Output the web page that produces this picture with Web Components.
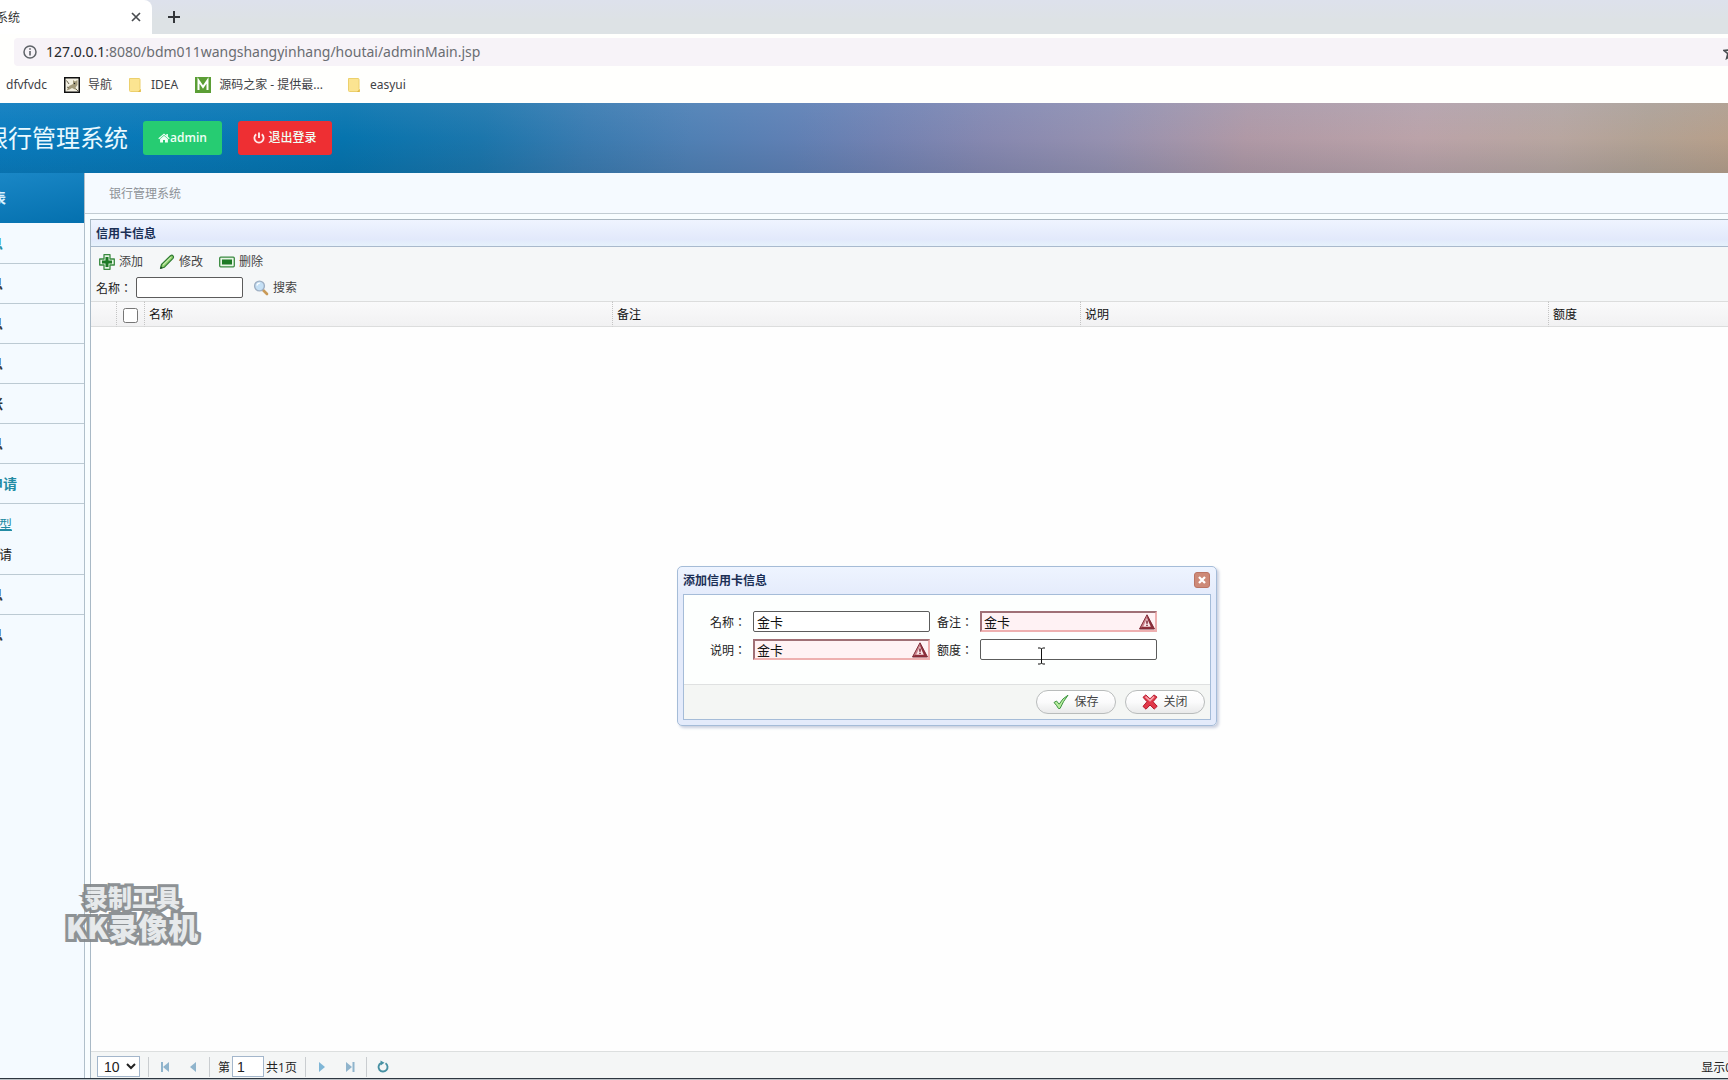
<!DOCTYPE html>
<html lang="zh-CN">
<head>
<meta charset="utf-8">
<title>银行管理系统</title>
<style>
  html, body { height: 100%; margin: 0; }
  body {
    overflow: hidden;
    font: 12px/16px "Open Sans", "Noto Sans CJK SC", sans-serif;
    color: #111;
    background: #fefffe;
  }
</style>
</head>
<body>
<bank-app></bank-app>

<script>
const ICONS = {
  close: ['0 0 12 12', '<path d="M2 2l8 8M10 2l-8 8" stroke="#4a4d51" stroke-width="1.7"/>'],
  plus: ['0 0 14 14', '<path d="M7 1v12M1 7h12" stroke="#33363a" stroke-width="2"/>'],
  info: ['0 0 14 14', '<circle cx="7" cy="7" r="6" fill="none" stroke="#5f6368" stroke-width="1.5"/><path d="M7 6v4.500M7 3.300v1.500" stroke="#5f6368" stroke-width="1.600"/>'],
  star: ['0 0 16 16', '<path d="M8 1.500l2 4.500 5 .5-3.800 3.200 1.200 4.800L8 12l-4.400 2.500 1.200-4.800L1 6.500 6 6z" fill="none" stroke="#4a4d51" stroke-width="1.600"/>'],
  cat: ['0 0 16 16', '<rect x=".75" y=".75" width="14.500" height="14.500" fill="#f3f0e2" stroke="#111" stroke-width="1.500"/><path d="M2.500 13.500L5 9l4-2V3l2 1.500L13.500 3v5l-2 2.500L13 13l-3-1-2-1-2.500 1.500z" fill="#a39a7b"/><path d="M2.500 3.500L5 7M12 12l2 2M3 10l2 1" stroke="#6b6550"/><circle cx="10.500" cy="6.500" r=".7" fill="#222"/>'],
  folder: ['0 0 12 16', '<path d="M.5 1.500h9.500q1 0 1 1v9l.8 3H1.500q-1 0-1-1z" fill="#fbe491" stroke="#ecd06c"/><path d="M9 15l2.500-3v3z" fill="#e2b944"/>'],
  m: ['0 0 16 16', '<rect width="16" height="16" fill="#5b9e35"/><path d="M3.500 13V3.500L8 10l4.500-6.500V13" fill="none" stroke="#fff" stroke-width="2"/>'],
  home: ['0 0 14 12', '<path d="M7 .5L.2 6.400l.9 1L7 2.400l5.900 5 .9-1L11.700 4.500V1.300H9.800v1.600z"/><path d="M2.300 7.300L7 3.400l4.700 3.900V11.500H8.200V8.300H5.800v3.200H2.300z"/>'],
  power: ['0 0 12 12', '<path d="M3.200 2.300a4.600 4.600 0 1 0 5.600 0" fill="none" stroke="#ffe9e9" stroke-width="1.800"/><path d="M6 .5v5.500" stroke="#ffe9e9" stroke-width="1.900"/>'],
  add: ['0 0 16 16', '<path d="M5 .7h6v4.300h4.300v6H11v4.300H5V11H.7V5H5z" fill="#e7f5e5" stroke="#3a8a40" stroke-width="1.300" stroke-linejoin="round"/><path d="M6.500 3h3v3.500H13v3H9.500V13h-3V9.500H3v-3h3.500z" fill="#1d7a25"/>'],
  edit: ['0 0 16 16', '<path d="M1.500 14.500l1-4L11.500 1.700q1.500-1 2.500.1 1 1.200 0 2.500L5.200 13.300z" fill="#8fcf6c" stroke="#2f7c33" stroke-width="1.200" stroke-linejoin="round"/><path d="M4 11L12 3.200" stroke="#c9efb3" stroke-width="1.100"/><path d="M1.200 14.800l.7-2.600 1.900 1.900z" fill="#1c4a22"/>'],
  remove: ['0 0 16 16', '<rect x=".7" y="3.200" width="14.600" height="9.600" rx="1" fill="#e7f5e5" stroke="#3a8a40" stroke-width="1.300"/><rect x="3" y="5.500" width="10" height="5" fill="#1d7a25"/>'],
  search: ['0 0 16 16', '<path d="M9.500 9.500l4.500 4.500" stroke="#c99a57" stroke-width="2.600" stroke-linecap="round"/><circle cx="6.500" cy="6" r="4.900" fill="#c5e0f5" stroke="#9fb0c4" stroke-width="1.400"/><path d="M3.800 5.500q.6-2.200 3-2.300" stroke="#fff" stroke-width="1.200" fill="none"/>'],
  warn: ['0 0 16 16', '<path d="M8 .8L15.500 15H.5z" fill="#8f2f3b" stroke="#7c2a36" stroke-linejoin="round"/><path d="M8 1.500L1.800 13.500l3-1L8.500 5z" fill="#c9808a"/><path d="M8 4.200L11.800 12.800H4.200z" fill="#f9e6e8"/><path d="M8 6.500v3.300M8 10.700v1.400" stroke="#7c2030" stroke-width="1.500"/>'],
  ok: ['0 0 16 16', '<path d="M1 8.500l2.500-1.500 2.700 3.200Q9 4.500 15 1.200 10 7.500 7 14.500H5.500Q3.500 11 1 8.500z" fill="#b9ec9f" stroke="#3c9440" stroke-linejoin="round"/>'],
  cancel: ['0 0 16 16', '<path d="M1 3.300L3.800.9 8 4.800 12 .9l3 2.200L11 7.700l4.200 4.600-3 2.800L8 11l-4 4.200-3-2.800 4-4.700z" fill="#e0394a" stroke="#b5172b" stroke-linejoin="round"/><path d="M3.500 2.700L8 6.700l4-4" stroke="#f6a3ab" stroke-width="1.700" fill="none"/>'],
  shut: ['0 0 16 16', '<rect x=".5" y=".5" width="15" height="15" rx="2.500" fill="#cd8a78" stroke="#bb7463"/><path d="M5 5l6 6M11 5l-6 6" stroke="#fff" stroke-width="2.300"/>'],
  first: ['0 0 16 16', '<path d="M5 3v10" stroke="#8fb4cc" stroke-width="2"/><path d="M12 3v10L6 8z" fill="#8fb4cc"/>'],
  prev: ['0 0 16 16', '<path d="M11 3v10L5 8z" fill="#8fb4cc"/>'],
  next: ['0 0 16 16', '<path d="M5 3v10l6-5z" fill="#7fb6d6"/>'],
  last: ['0 0 16 16', '<path d="M11.500 3v10" stroke="#8fb4cc" stroke-width="2"/><path d="M4 3v10l6-5z" fill="#8fb4cc"/>'],
  reload: ['0 0 16 16', '<path d="M10.500 4.300a4.500 4.500 0 1 1-4.600-.2" fill="none" stroke="#4791a3" stroke-width="1.900"/><path d="M5.500 1.500l4 2.300-3.800 2.600z" fill="#4791a3"/>'],
  cursor: ['0 0 9 18', '<path d="M1 1h2.500l1 1 1-1H8M1 17h2.500l1-1 1 1H8M4.500 2v14" fill="none" stroke="#111"/>']
};

function define(name, css, html) {
  customElements.define(name, class extends HTMLElement {
    constructor() {
      super();
      const root = this.attachShadow({ mode: 'open' });
      root.innerHTML = `<style>*{box-sizing:border-box}${css}</style>` +
        (typeof html === 'function' ? html(this) : html);
    }
  });
}

define('ui-icon', `
  :host { display: inline-flex; flex: none; width: 16px; height: 16px; }
  svg { width: 100%; height: 100%; fill: currentColor; }
`, el => {
  const [box, body] = ICONS[el.getAttribute('name')];
  return `<svg viewBox="${box}" aria-hidden="true">${body}</svg>`;
});

define('bookmark-link', `
  :host { display: flex; }
  a { display: flex; align-items: center; gap: 8px; color: #3f4246; text-decoration: none; white-space: nowrap; }
`, '<a href="#"><slot name="icon"></slot><span><slot></slot></span></a>');

define('browser-chrome', `
  :host { display: block; flex: none; background: #fffffd; overflow: hidden; font-family: "Noto Sans", "Noto Sans CJK SC", sans-serif; }
  .tabs { display: flex; align-items: center; height: 34px; background: linear-gradient(#dde1ec, #dde2e5 60%); }
  .tab { display: flex; align-items: center; justify-content: space-between; width: 152px; height: 34px;
    padding-right: 10px; background: #fff; border-radius: 0 8px 0 0; color: #333; overflow: hidden; }
  .tab span { margin-left: -4px; padding-top: 2px; }
  button { display: flex; padding: 0; border: 0; background: none; }
  .close ui-icon { width: 12px; height: 12px; }
  .new { margin-left: 15px; }
  .new ui-icon { width: 14px; height: 14px; }
  .omni { display: flex; align-items: center; gap: 9px; height: 28px; margin: 4px 0 0 14px; padding-left: 9px;
    background: #f7f3f8; border-radius: 4px 0 0 4px; }
  .omni > ui-icon { width: 14px; height: 14px; }
  .url { flex: 1; font-size: 14px; line-height: 20px; color: #6a6d72; }
  .url b { font-weight: 400; color: #26282b; }
  .star { margin-right: -11px; }
  .marks { display: flex; align-items: center; height: 37px; padding-left: 6px; gap: 17px; }
  .folder { width: 12px; margin-right: 2px; }
  .wide { margin-right: 8px; }
`, `
  <div class="tabs">
    <div class="tab"><span>系统</span><button class="close" aria-label="关闭标签页"><ui-icon name="close"></ui-icon></button></div>
    <button class="new" aria-label="新标签页"><ui-icon name="plus"></ui-icon></button>
  </div>
  <div class="omni"><ui-icon name="info"></ui-icon>
    <span class="url"><b>127.0.0.1</b>:8080/bdm011wangshangyinhang/houtai/adminMain.jsp</span>
    <button class="star" aria-label="收藏"><ui-icon name="star"></ui-icon></button>
  </div>
  <nav class="marks">
    <bookmark-link>dfvfvdc</bookmark-link>
    <bookmark-link><ui-icon slot="icon" name="cat"></ui-icon>导航</bookmark-link>
    <bookmark-link><ui-icon slot="icon" class="folder" name="folder"></ui-icon>IDEA</bookmark-link>
    <bookmark-link class="wide"><ui-icon slot="icon" name="m"></ui-icon>源码之家 - 提供最...</bookmark-link>
    <bookmark-link><ui-icon slot="icon" class="folder" name="folder"></ui-icon>easyui</bookmark-link>
  </nav>
`);

define('app-banner', `
  :host { display: flex; align-items: center; gap: 16px; flex: none; height: 70px; overflow: hidden;
    background:
      linear-gradient(rgba(150,190,230,.12), rgba(0,0,0,0) 50%, rgba(0,30,50,.1)),
      linear-gradient(97deg, #0a7cbe 0, #0674ae 20%, #1c76ac 28%, #3a7bb0 34%, #5080b4 40%, #6080b4 46%, #7282b2 51%, #8688b0 57%, #9691b0 64%, #b099a6 72%, #bba3a9 82%, #b8a6a0 90%, #b3a294 95%, #b79f8a 100%); }
  h1 { margin: 0 0 0 -16px; font-size: 24px; line-height: 32px; font-weight: 400; color: #e9f9ff; white-space: nowrap; }
  button { display: flex; align-items: center; justify-content: center; gap: 3px; height: 34px; padding: 0 15px; border: 0; border-radius: 3px;
    font: 600 12px/16px "Open Sans", "Noto Sans CJK SC", sans-serif; color: #effff5; }
  .user { background: #26cc72; gap: 0; min-width: 79px; margin-left: -1px; }
  .exit { background: #ee2f33; min-width: 94px; font-weight: 500; }
  .user ui-icon { width: 12px; height: 10px; }
  .exit ui-icon { width: 12px; height: 12px; }
`, `
  <h1>银行管理系统</h1>
  <button class="user"><ui-icon name="home"></ui-icon>admin</button>
  <button class="exit"><ui-icon name="power"></ui-icon>退出登录</button>
`);

define('nav-item', `
  :host { display: block; border-bottom: 1px solid #bccad3; }
  a { display: block; height: 39px; margin-left: -11px; font-size: 14px; line-height: 40px; font-weight: 700; color: #2e3338; text-decoration: none; }
  :host([active]) a { color: #238ba3; }
`, '<a href="#"><slot></slot></a>');

define('side-nav', `
  :host { display: block; flex: none; width: 85px; overflow: hidden; background: #f4faff; border-right: 1px solid #b0bfca; }
  h2 { margin: 0; height: 50px; text-indent: -8px; font-size: 14px; line-height: 50px; font-weight: 700; color: #d9f2ff;
    background: linear-gradient(170deg, #1a87c6, #0470ae); }
  nav { padding-top: 1px; }
  .kids { padding: 5px 0; border-bottom: 1px solid #bccad3; }
  .kids a { display: block; margin-left: -1px; font-size: 13px; line-height: 30px; color: #222; text-decoration: none; }
  .kids .on { color: #238ba3; text-decoration: underline; }
  nav > :last-child { border: 0; }
`, `
  <h2>表</h2>
  <nav>
    <nav-item active>息</nav-item><nav-item>息</nav-item><nav-item>息</nav-item><nav-item>息</nav-item>
    <nav-item>账</nav-item><nav-item>息</nav-item><nav-item active>申请</nav-item>
    <div class="kids"><a class="on" href="#">型</a><a href="#">请</a></div>
    <nav-item>息</nav-item><nav-item>息</nav-item>
  </nav>
`);

define('tool-button', `
  :host { display: inline-flex; }
  button { display: flex; align-items: center; gap: 4px; padding: 0; border: 0; background: none; font: inherit; color: #444; white-space: nowrap; }
  :host([round]) button { justify-content: center; gap: 5px; width: 80px; height: 24px; border: 1px solid #b9bcbc; border-radius: 12px;
    background: linear-gradient(#fff, #fbfbfc 50%, #e9eaea); }
`, el => `<button><ui-icon name="${el.getAttribute('icon')}"></ui-icon><slot></slot></button>`);

define('form-field', `
  :host { display: flex; align-items: center; gap: var(--gap, 7px); color: #222; }
  label { white-space: nowrap; width: 36px; font-family: "Noto Sans CJK TC", sans-serif; font-feature-settings: "locl" 0; }
  .box { display: flex; align-items: center; width: var(--w, 177px); height: 21px; border: 1px solid #5c5c5c; border-radius: 2px; background: #fff; }
  input { flex: 1; min-width: 0; height: 100%; padding: 0 0 0 3px; border: 0; outline: 0; background: none;
    font: 13px/16px "Open Sans", "Noto Sans CJK SC", sans-serif; color: #111; }
  :host([invalid]) .box { border: 2px solid; border-color: #a07076 #eeb0b0 #eeb0b0 #a07076; border-radius: 0; background: #fff2f4; }
  :host([invalid]) input { padding-left: 2px; }
`, el => `<label for="f"><slot></slot></label><div class="box"><input id="f" value="${el.getAttribute('value') || ''}">${el.hasAttribute('invalid') ? '<ui-icon name="warn"></ui-icon>' : ''}</div>`);

define('page-bar', `
  :host { display: flex; align-items: center; gap: 8px; flex: none; height: 27px; padding: 3px 0 0 6px; border-top: 1px solid #dcdfdf; background: #f4f6f6; overflow: hidden; white-space: nowrap; color: #222; }
  select { width: 43px; height: 21px; padding: 0 0 0 2px; border: 1px solid #a3b6cb; background: #fff; font: 14px/16px "Liberation Sans", sans-serif; color: #222; }
  input { width: 32px; height: 21px; padding: 0 4px; border: 1px solid #a3b6cb; background: #fff; font: 14px/16px "Liberation Sans", sans-serif; color: #222; }
  i { width: 1px; height: 20px; background: #c9cdd0; }
  button { display: flex; padding: 0; border: 0; background: none; }
  .grp { display: flex; gap: 12px; }
  .page { display: flex; align-items: center; gap: 2px; }
  .page label, .page span, .end { padding-top: 2px; }
  .end { margin: 0 -4px 0 auto; }
`, `
  <select aria-label="每页条数"><option>10</option></select><i></i>
  <div class="grp"><button aria-label="首页"><ui-icon name="first"></ui-icon></button><button aria-label="上一页"><ui-icon name="prev"></ui-icon></button></div><i></i>
  <div class="page"><label for="p">第</label><input id="p" value="1"><span>共1页</span></div><i></i>
  <div class="grp"><button aria-label="下一页"><ui-icon name="next"></ui-icon></button><button aria-label="末页"><ui-icon name="last"></ui-icon></button></div><i></i>
  <button aria-label="刷新"><ui-icon name="reload"></ui-icon></button>
  <span class="end">显示0</span>
`);

define('data-panel', `
  :host { display: flex; flex-direction: column; flex: 1; min-height: 0; border-top: 1px solid #a9b6c0; border-left: 1px solid #a9b9c6; overflow: hidden; background: #fefefe; }
  h2 { margin: 0; padding: 1px 0 0 5px; height: 27px; font-size: 12px; line-height: 26px; font-weight: 700; color: #1b2f55;
    background: linear-gradient(#eff4ff, #e2e9fb 75%, #e6f2fc); border-bottom: 1px solid #a9b9cc; }
  .tools { height: 54px; background: #f5f7f8; padding: 7px 0 0 5px; }
  .row { display: flex; align-items: center; }
  .actions { gap: 16px; padding-left: 3px; height: 16px; }
  .query { gap: 10px; height: 21px; margin-top: 7px; }
  form-field { --w: 107px; --gap: 4px; }
  table { width: 100%; table-layout: fixed; border-collapse: separate; border-spacing: 0; background: linear-gradient(#fafafb, #f1f1f2); }
  th { height: 26px; padding: 2px 4px 0; border: 0 dotted #c4c4c4; border-right-width: 1px; border-top: 1px solid #dcdddd; border-bottom: 1px solid #dcdddd; text-align: left; font-weight: 400; color: #111; }
  th:last-child { border-right: 0; }
  th input { display: block; width: 15px; height: 15px; margin: 0 0 0 2px; }
  .grid { flex: 1; }
`, `
  <h2>信用卡信息</h2>
  <div class="tools">
    <div class="row actions"><tool-button icon="add">添加</tool-button><tool-button icon="edit">修改</tool-button><tool-button icon="remove">删除</tool-button></div>
    <div class="row query"><form-field>名称：</form-field><tool-button icon="search">搜索</tool-button></div>
  </div>
  <div class="grid"><table>
    <colgroup><col style="width:26px"><col style="width:28px"><col style="width:468px"><col style="width:468px"><col style="width:468px"><col></colgroup>
    <thead><tr><th></th><th><input type="checkbox" aria-label="全选"></th><th>名称</th><th>备注</th><th>说明</th><th>额度</th></tr></thead>
  </table></div>
  <page-bar></page-bar>
`);

define('card-dialog', `
  :host { position: absolute; left: 677px; top: 566px; width: 540px; display: block; padding: 5px; border: 1px solid #a5bcd8; border-radius: 5px;
    background: linear-gradient(#eef4ff, #e4ebfb 30px); box-shadow: 2px 2px 3px #c9cfdf; }
  header { display: flex; align-items: flex-start; justify-content: space-between; height: 22px; padding-right: 1px; }
  h3 { margin: 0; font-size: 12px; line-height: 18px; font-weight: 700; color: #1b2f55; }
  header button { display: flex; padding: 0; border: 0; background: none; }
  .body { border: 1px solid #a5bcd8; background: #fdfffe; }
  .fields { display: grid; grid-template-columns: max-content max-content; gap: 7px; height: 89px; align-content: start; padding: 16px 0 0 26px; }
  footer { display: flex; justify-content: flex-end; gap: 9px; padding: 5px; border-top: 1px solid #dfe1e1; background: #f4f6f4; }
`, `
  <header><h3>添加信用卡信息</h3><button aria-label="关闭窗口"><ui-icon name="shut"></ui-icon></button></header>
  <div class="body">
    <div class="fields">
      <form-field value="金卡">名称：</form-field><form-field value="金卡" invalid>备注：</form-field>
      <form-field value="金卡" invalid>说明：</form-field><form-field>额度：</form-field>
    </div>
    <footer><tool-button round icon="ok">保存</tool-button><tool-button round icon="cancel">关闭</tool-button></footer>
  </div>
`);

define('recorder-mark', `
  :host { position: absolute; left: 63px; top: 883px; width: 138px; display: block; text-align: center; opacity: .9; white-space: nowrap;
    font: 900 24px/28px "Noto Sans CJK SC", sans-serif; color: #e4e7e9; -webkit-text-stroke: 6px #82878a; paint-order: stroke fill; }
  .big { font-size: 30px; line-height: 30px; }
`, '<div>录制工具</div><div class="big">KK录像机</div>');

define('bank-app', `
  :host { display: flex; flex-direction: column; height: 100vh; position: relative; overflow: hidden; }
  main { display: flex; flex: 1; min-height: 0; }
  .content { display: flex; flex-direction: column; flex: 1; min-width: 0; background: #f8fdff; }
  .crumb { height: 41px; padding: 1px 0 0 24px; line-height: 40px; color: #8d9297; background: #f5faff; border-bottom: 1px solid #c2ccd3; }
  data-panel { margin: 5px 0 0 5px; }
  .edge { flex: none; height: 2px; background: #b9bfc4; border-top: 1px solid #2d3640; }
  .pointer { position: absolute; left: 1037px; top: 647px; width: 9px; height: 18px; }
`, `
  <browser-chrome></browser-chrome>
  <app-banner></app-banner>
  <main><side-nav></side-nav><div class="content"><div class="crumb">银行管理系统</div><data-panel></data-panel></div></main>
  <div class="edge"></div>
  <card-dialog></card-dialog>
  <recorder-mark></recorder-mark>
  <ui-icon class="pointer" name="cursor"></ui-icon>
`);
</script>
</body>
</html>
